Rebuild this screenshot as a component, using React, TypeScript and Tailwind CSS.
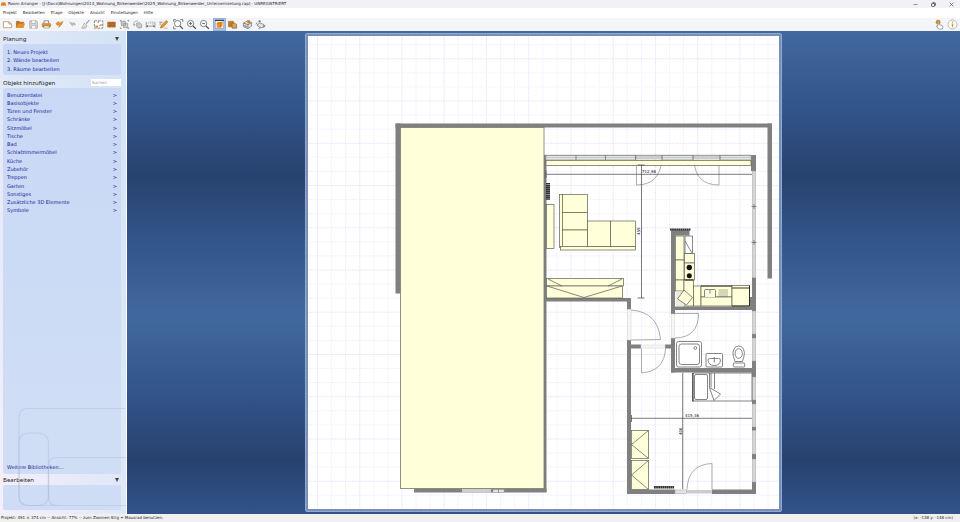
// src/App.tsx
import { useState, type ReactNode } from "react";

const TITLE =
  "Room Arranger - [J:\\Docs\\Wohnungen\\2014_Wohnung_Birkenwerder\\2025_Wohnung_Birkenwerder_Untervermietung.rap] - UNREGISTRIERT";

const MENU = ["Projekt", "Bearbeiten", "Etage", "Objekte", "Ansicht", "Einstellungen", "Hilfe"];

const STEPS = ["1. Neues Projekt", "2. Wände bearbeiten", "3. Räume bearbeiten"];

const CATEGORIES = [
  "Benutzerdatei",
  "Basisobjekte",
  "Türen und Fenster",
  "Schränke",
  "Sitzmöbel",
  "Tische",
  "Bad",
  "Schlafzimmermöbel",
  "Küche",
  "Zubehör",
  "Treppen",
  "Garten",
  "Sonstiges",
  "Zusätzliche 3D Elemente",
  "Symbole",
];

const ORANGE = "#e8912a";
const DARK = "#555555";
const GREY = "#a5a5a5";

// ====== TOOLBAR ICONS (12x12 grid) ======
type Tool = { label: string; icon: ReactNode; active?: boolean };

const lens = (
  <>
    <circle cx="5" cy="5" r="3.4" fill="#fff" stroke={DARK} strokeWidth="0.8" />
    <path d="M7.6 7.6 10.8 10.8" stroke={DARK} strokeWidth="1.4" />
  </>
);

const TOOL_GROUPS: Tool[][] = [
  [
    { label: "Neu", icon: <path d="M1.5 9.5V3h6l3 2.5v4z M7.5 3v2.5h3" fill="#fff" stroke="#b08a5c" strokeWidth="0.8" /> },
    {
      label: "Öffnen",
      icon: (
        <>
          <path d="M1.5 9.5V2.5h3l1 1h4V5" fill="#b9701c" stroke="#9a5f1c" strokeWidth="0.6" />
          <path d="M1.5 9.8 3.5 5h7.5L9.2 9.8z" fill={ORANGE} />
        </>
      ),
    },
    {
      label: "Speichern",
      icon: (
        <>
          <path d="M2 2h7l1.2 1.2V10H2z" fill="#dcdcdc" stroke={GREY} strokeWidth="0.9" />
          <path d="M4 2v3h4V2M3.8 10V7h4.6v3" fill="#f8f8f8" stroke={GREY} strokeWidth="0.7" />
        </>
      ),
    },
    {
      label: "Drucken",
      icon: (
        <>
          <path d="M3.3 5V2h5v3" fill="#fff" stroke={DARK} strokeWidth="0.7" />
          <rect x="1.2" y="4.8" width="9.4" height="3.8" rx="0.8" fill={ORANGE} stroke="#a8681f" strokeWidth="0.5" />
          <path d="M3 7.6h6v2.2H3z" fill="#fff" stroke={DARK} strokeWidth="0.5" />
        </>
      ),
    },
    {
      label: "Rückgängig",
      icon: <path d="M2 4.8 5 2.8l.5 1.2C7.5 3.6 8.6 3 9.8 2.6 9.2 5.2 7.6 7 5 9.3c.7-1.3.8-2.2.6-3l-2 .7z" fill={ORANGE} stroke="#a8681f" strokeWidth="0.4" />,
    },
    {
      label: "Wiederholen",
      icon: <path d="M9.8 5.5 6.8 3.2 6.3 4.3C4.5 3.8 3.5 3.3 2.2 3c1.2 2.3 2.3 3.7 4.8 6-.7-1.3-.8-2-.6-2.7l2.2.7z" fill="#b8b8b8" />,
    },
    {
      label: "Format übertragen",
      icon: (
        <>
          <path d="M10.3 1.2 6.6 5.2" stroke={GREY} strokeWidth="1.3" />
          <path d="M4.5 4.6 7.6 7.2 6 10H1.8c1.5-1.5 1.8-3 2.7-5.4z" fill="#ececec" stroke="#8f8f8f" strokeWidth="0.7" />
          <path d="M4 10l1.3-2.5" stroke="#8f8f8f" strokeWidth="0.5" />
        </>
      ),
    },
    {
      label: "Grundriss",
      icon: (
        <>
          <rect x="1.5" y="2" width="9.2" height="8" fill="#fff" stroke={DARK} strokeWidth="0.7" strokeDasharray="3 1" />
          <path d="M2.5 7h3v2.5h-3z" fill={ORANGE} />
          <path d="M5.8 2v2.5M7.5 6.5h3M7.5 6.5v1.5" stroke={DARK} strokeWidth="0.7" />
        </>
      ),
    },
    {
      label: "Wände",
      icon: (
        <>
          <rect x="1.5" y="3" width="9" height="6.2" fill="#b87427" />
          <path d="M1.5 5h9M1.5 7.1h9M4 3v2M7.5 3v2M5.8 5v2.1M9 5v2.1M4 7.1v2.1M7.5 7.1v2.1" stroke="#8a5a25" strokeWidth="0.4" />
        </>
      ),
    },
    {
      label: "Gruppieren",
      icon: (
        <>
          <path d="M2.5 2.5h4.5v4.5H2.5zM5 5h4.5v4.5H5z" fill="#cccccc" stroke="#8c8c8c" strokeWidth="0.7" />
          <path d="M1 1.2h1.6v1.6H1zM9.4 1.2H11v1.6H9.4zM1 9.3h1.6v1.6H1zM9.4 9.3H11v1.6H9.4z" fill="#999999" />
        </>
      ),
    },
    {
      label: "Drehen",
      icon: (
        <>
          <path d="M6.5 2.5C3 1.5 1 4 2.2 7" fill="none" stroke={GREY} strokeWidth="1" />
          <path d="M1 5.5 2.3 8l1.8-2z" fill={GREY} />
          <path d="M5 4.5 8.5 4l2 2v3.5L7 10 5 8z" fill="#c9c9c9" stroke="#909090" strokeWidth="0.7" />
        </>
      ),
    },
    {
      label: "Bemaßung",
      icon: (
        <>
          <path d="M1.3 3v6.5M10.8 3v6.5M1.3 7.8h9.5" stroke={DARK} strokeWidth="0.6" />
          <path d="M1.5 7.8 3.3 6.8v2zM10.6 7.8 8.8 6.8v2z" fill={DARK} />
          <path d="M3.5 3.2v2.5M5 3.2h1.2v2.5M7.5 3.2h1.2v2.5H7.5" fill="none" stroke={GREY} strokeWidth="0.7" />
        </>
      ),
    },
    {
      label: "Zeichnen",
      icon: (
        <>
          <path d="M1.5 3.5h3.5M1.5 5.5h2" stroke={DARK} strokeWidth="0.7" />
          <path d="M2.5 10 3.5 7 9 1.5l1.8 1.7L5.5 9z" fill={ORANGE} stroke="#946025" strokeWidth="0.5" />
          <path d="M6 10h4.5" stroke={ORANGE} strokeWidth="0.8" />
        </>
      ),
    },
  ],
  [
    {
      label: "Alles zeigen",
      icon: (
        <>
          {lens}
          <path d="M.7 3V.7H3M8 .7h2.7V3M.7 8v2.7H3" fill="none" stroke={DARK} strokeWidth="0.8" />
        </>
      ),
    },
    { label: "Vergrößern", icon: <>{lens}<path d="M3.2 5h3.6M5 3.2v3.6" stroke={DARK} strokeWidth="0.9" /></> },
    { label: "Verkleinern", icon: <>{lens}<path d="M3.2 5h3.6" stroke={DARK} strokeWidth="0.9" /></> },
  ],
  [
    {
      label: "3D Ansicht",
      active: true,
      icon: (
        <>
          <path d="M1.3 1.5h9.4v9H1.3z" fill="#f4efe6" stroke="#777" strokeWidth="0.6" />
          <path d="M1 1.5h10" stroke="#333" strokeWidth="1.2" />
          <path d="M3 4.5 5 3.2h4.5L9 8 7 9.5H3z" fill={ORANGE} />
          <path d="M3 4.5h4L9.5 3.2M7 4.5v5" fill="none" stroke="#a8681f" strokeWidth="0.5" />
        </>
      ),
    },
    {
      label: "Objektliste",
      icon: (
        <>
          <path d="M1.5 2.5h5.5v6h-5.5z" fill="#c9781f" stroke="#8f5a1c" strokeWidth="0.5" />
          <path d="M5.5 4.5h3L10.5 6v4h-5z" fill="#d9a25e" stroke="#7d5a30" strokeWidth="0.7" />
        </>
      ),
    },
  ],
  [
    {
      label: "3D Objekt",
      icon: (
        <>
          <path d="M1.5 4.5 6 2l4.5 2v3.8L6.5 10.5l-5-2z" fill="#e2e2e2" stroke="#777" strokeWidth="0.8" />
          <path d="M1.5 4.5 6.5 6.2l4-2.2M6.5 6.2v4.3" fill="none" stroke={DARK} strokeWidth="0.7" />
          <path d="M5.8 1.5h3v3.2h-3z" fill="#d37a1c" />
          <path d="M2.5 6.5 5 7.5v1.5L2.5 8z" fill="#777" />
        </>
      ),
    },
    {
      label: "3D Rundgang",
      icon: (
        <>
          <path d="M2 6.5 5.5 4.3 9.5 6 9 8.8 6 9.8z" fill="#e4e4e4" stroke="#666" strokeWidth="0.7" />
          <circle cx="5" cy="2.6" r="1.2" fill="#777" />
          <path d="M.8 5.5 2.5 4M11 6.5 9.5 9.5M4 10.5l2-1.5" stroke="#666" strokeWidth="1" />
        </>
      ),
    },
  ],
];

function ToolButton({ tool }: { tool: Tool }) {
  return (
    <button
      type="button"
      aria-label={tool.label}
      className={
        tool.active
          ? "grid h-[13px] w-[13px] place-items-center bg-[#b5cbee] outline outline-[#92b0dd] -outline-offset-1"
          : "grid h-[13px] w-[13px] place-items-center"
      }
    >
      <svg viewBox="0 0 12 12" className="h-[11px] w-[11px]" fill="none">
        {tool.icon}
      </svg>
    </button>
  );
}

function TitleBar() {
  return (
    <header className="flex h-2 shrink-0 items-center gap-[2px] bg-[#f1f1f8] pl-[1px] text-[4px] leading-none">
      <svg viewBox="0 0 10 7" className="h-[4px] w-[5px]">
        <path d="M0 2.5 2 0h6l2 2.5V7H0z" fill="#e8912a" />
        <path d="M1.5 3.5h7" stroke="#b96a17" />
      </svg>
      <h1 className="flex-1 truncate leading-[8px] text-[#222]">{TITLE}</h1>
      <div className="flex">
        <button type="button" aria-label="Minimieren" className="grid h-2 w-[18px] place-items-center">
          <svg viewBox="0 0 5 5" className="size-[5px]"><path d="M.5 2.5h4" stroke="#666" strokeWidth="0.7" /></svg>
        </button>
        <button type="button" aria-label="Wiederherstellen" className="grid h-2 w-[18px] place-items-center">
          <svg viewBox="0 0 5 5" className="size-[5px]" fill="none" stroke="#444" strokeWidth="0.8">
            <rect x="0.6" y="1.5" width="2.9" height="2.9" rx="0.5" />
            <path d="M1.5.7h2.2q.7 0 .7.7v2.2" />
          </svg>
        </button>
        <button type="button" aria-label="Schließen" className="grid h-2 w-[18px] place-items-center">
          <svg viewBox="0 0 5 5" className="size-[5px]"><path d="M.6.6 4.4 4.4M4.4.6.6 4.4" stroke="#555" strokeWidth="0.7" /></svg>
        </button>
      </div>
    </header>
  );
}

function Toolbar() {
  return (
    <div className="flex h-[13px] shrink-0 items-center justify-between bg-[#f3f5f8] px-[1px]">
      <div className="flex gap-[2px]">
        {TOOL_GROUPS.map((group, i) => (
          <div key={i} className="flex">
            {group.map((t) => (
              <ToolButton key={t.label} tool={t} />
            ))}
          </div>
        ))}
      </div>
      <div className="flex">
        <ToolButton
          tool={{
            label: "Registrieren",
            icon: (
              <>
                <circle cx="4.5" cy="3.5" r="2.6" fill="#d98a2b" />
                <path d="M4 3.2q.8-.8 1.3 0v3l3.5.8q1 .4.8 1.6L9 11H5L2.5 7.8q.4-.9 1.5 0z" fill="#fff" stroke="#777" strokeWidth="0.7" />
              </>
            ),
          }}
        />
        <ToolButton
          tool={{
            label: "Info",
            icon: (
              <>
                <circle cx="6" cy="6" r="4.9" fill="#fff" stroke="#a9a9a9" strokeWidth="0.9" />
                <path d="M6 5v4M6 2.7v1.4" stroke={ORANGE} strokeWidth="1.5" />
              </>
            ),
          }}
        />
      </div>
    </div>
  );
}

function SectionHeader({ children, collapsible }: { children: string; collapsible?: boolean }) {
  return (
    <div className="flex h-[11px] items-center justify-between font-['Noto_Sans',sans-serif] text-[6px] leading-none text-[#222]">
      <h2>{children}</h2>
      {collapsible && (
        <button type="button" aria-label={`${children} einklappen`} className="px-1">
          <svg viewBox="0 0 4 4" className="size-1"><path d="M0 0h4L2 4z" fill="#444" /></svg>
        </button>
      )}
    </div>
  );
}

function Sidebar() {
  const [query, setQuery] = useState("");

  return (
    <aside className="relative flex w-[127px] shrink-0 flex-col border-r border-white bg-linear-to-tr from-[#f6effb] via-[#e0e8f7] to-[#d3e3f5] px-[3px] pt-[2px] pb-1 text-[#1c1c9c]">
      <SectionHeader collapsible>Planung</SectionHeader>
      <ol className="mr-[2px] grid h-[31px] rounded-[2px] bg-[#c9d8f5] px-1 pt-1 pb-[1px] text-[5px]">
        {STEPS.map((s) => (
          <li key={s} className="flex items-center">
            <a href="#" className="leading-none">{s}</a>
          </li>
        ))}
      </ol>

      <div className="mt-[2px] mr-[2px] flex items-center justify-between">
        <SectionHeader>Objekt hinzufügen</SectionHeader>
        <input
          aria-label="Suchen"
          value={query}
          onChange={(e) => setQuery(e.target.value)}
          placeholder="Suchen"
          className="h-[7px] w-[30px] bg-white px-[1px] text-[4px] leading-none outline-none placeholder:text-[#999]"
        />
      </div>

      <div className="mr-[2px] flex flex-1 flex-col justify-between rounded-[2px] bg-linear-to-b from-[#c9d8f5] to-[#d0def5] px-1 pt-[3px] pb-[3px] text-[5px]">
        <ul className="grid h-[124px]">
          {CATEGORIES.map((c) => (
            <li key={c} className="flex">
              <a href="#" className="flex flex-1 items-center justify-between leading-none">
                <span>{c}</span>
                <span>&gt;</span>
              </a>
            </li>
          ))}
        </ul>
        <a href="#" className="self-start leading-[7px]">Weitere Bibliotheken...</a>
      </div>

      <SectionHeader collapsible>Bearbeiten</SectionHeader>
      <div className="mr-[2px] h-[25px] rounded-[2px] bg-[#cedcf5]" />

      {/* Decorative outline in the lower corner */}
      <svg
        viewBox="0 0 126 119"
        className="pointer-events-none absolute bottom-0 left-0 h-[119px] w-[126px]"
        fill="none"
        stroke="#a4b4d4"
        strokeOpacity="0.35"
        strokeWidth="1.2"
      >
        <path d="M126 13.5H28q-9 0-9 9v79q0 9 9 9h98" />
        <rect x="19" y="38" width="29.5" height="72.5" rx="9" />
        <path d="M126 62.5H57q-8.5 0-8.5 8v32q0 8 8.5 8" />
      </svg>
    </aside>
  );
}

// ====== FLOOR PLAN ======
type Rect = [number, number, number, number]; // x1, y1, x2, y2

const WALLS: Rect[] = [
  [395.5, 123.5, 772, 127.5],
  [395.5, 123.5, 400.5, 293.5],
  [767.5, 123.5, 772, 278.5],
  [544, 155, 546.5, 492],
  [414, 488.5, 546.5, 492.5],
  [751, 155, 756, 171],
  [752, 277.5, 756, 311],
  [671, 306.5, 756, 310],
  [671, 230, 675, 314],
  [671, 230, 689.5, 235.5],
  [546, 298, 631, 301.5],
  [627, 298, 631, 309.5],
  [627, 340, 631, 494],
  [631, 344.5, 641, 348.5],
  [665, 344.5, 672, 348.5],
  [671, 338, 675, 372.5],
  [671, 368, 756, 372.5],
  [752, 334, 756, 338],
  [752, 361, 756, 377],
  [752, 400, 756, 404],
  [752, 427, 756, 430.5],
  [752, 454, 756, 459],
  [752, 482, 756, 494],
  [627, 489.5, 675, 494],
  [712, 489.5, 756, 494],
];

const OPENINGS: Rect[] = [
  [546, 155.5, 636, 159.5],
  [662, 155.5, 693, 159.5],
  [720, 155.5, 751, 159.5],
  [752.5, 171, 755.5, 277.5],
  [752.5, 311, 755.5, 334],
  [752.5, 338, 755.5, 361],
  [752.5, 377, 755.5, 400],
  [752.5, 404, 755.5, 427],
  [752.5, 430.5, 755.5, 454],
  [752.5, 459, 755.5, 482],
  [675, 490, 686.5, 493.5],
  [493, 489.5, 504, 492.5],
];

const FURNITURE: Rect[] = [
  // strip below the windows
  [546, 160.5, 751, 165.5],
  // sideboard and sofa
  [546.5, 204.5, 554, 248.5],
  [559.5, 194.5, 563, 247.5],
  [562.5, 194.5, 587.5, 212.5],
  [562.5, 212.5, 587.5, 230],
  [562.5, 230, 587.5, 247],
  [587.5, 221, 610.5, 246.5],
  [610.5, 221, 635.5, 246.5],
  [560.5, 246.5, 635.5, 250],
  [546.5, 278.5, 623.5, 286],
  [546.5, 286, 622.5, 298],
  // kitchen
  [675.5, 236, 684, 260],
  [675.5, 260, 684, 280],
  [675.5, 280, 684, 291],
  [684.5, 253.5, 694.5, 263],
  [684.5, 263, 694.5, 280],
  [684, 280, 693.5, 306],
  [693.5, 286, 701, 306],
  [701, 286, 732, 297],
  [701, 297, 732, 306],
  [732, 285.5, 749.5, 306],
  // wardrobes
  [631.5, 430.5, 648.5, 458.5],
  [631.5, 460.5, 648.5, 489.5],
];

const GRID_X = Array.from({ length: 33 }, (_, i) => 317.5 + i * 14.08);
const GRID_Y = Array.from({ length: 34 }, (_, i) => 44.7 + i * 14.08);

function Boxes({ items }: { items: Rect[] }) {
  return (
    <>
      {items.map(([x1, y1, x2, y2], i) => (
        <rect key={i} x={x1} y={y1} width={x2 - x1} height={y2 - y1} />
      ))}
    </>
  );
}

function FloorPlan() {
  return (
    <svg viewBox="308 36 471 473" className="h-full w-auto bg-white" role="img" aria-label="Grundriss" fill="none">
      {/* Grid */}
      <g strokeWidth="0.8" strokeDasharray="2 0.6">
        {GRID_X.map((x, i) => (
          <path key={x} d={`M${x} 36V509`} stroke={i % 3 === 0 ? "#e2e2fb" : "#efeffc"} />
        ))}
        {GRID_Y.map((y, i) => (
          <path key={y} d={`M308 ${y}H779`} stroke={i % 3 === 1 ? "#e2e2fb" : "#efeffc"} />
        ))}
      </g>

      <g fill="#808080"><Boxes items={WALLS} /></g>

      {/* Terrace */}
      <rect x="400.5" y="127.5" width="143.5" height="361" fill="#ffffd9" stroke="#77776a" strokeWidth="0.8" />
      <path d="M462 489h29v3.5h-29z" fill="#cfcfcf" />
      <path d="M636 155.5h26v4h-26zM693 155.5h27v4h-27zM686.5 490H712v3.5h-25.5z" fill="#cccccc" />

      {/* Windows */}
      <g fill="#e3e6e6" stroke="#9a9a9a" strokeWidth="0.5"><Boxes items={OPENINGS} /></g>
      <path
        d="M546 157.5h90M662 157.5h31M720 157.5h31M754 171v106M754 311v23M754 338v23M754 377v23M754 404v23M754 431v23M754 459v23"
        stroke="#a8a8a8"
        strokeWidth="0.5"
      />
      <path d="M576 155v5M605.5 155v5M635.5 155v5M662 155v5M693 155v5M720 155v5M751.5 206.5h5M751.5 242.5h5M754 204v5M754 240v5M498.5 489.5v3" stroke="#666" strokeWidth="0.7" />
      <path d="M544 155.3h207" stroke="#777" strokeWidth="0.7" />

      {/* Door frames and swings */}
      <path d="M627.5 309.5h3.5V340h-3.5zM671.5 314h3v24h-3zM641 345h24v3h-24z" fill="#f6f6f6" stroke="#d2d2d2" strokeWidth="0.5" />
      <g stroke="#8a8a8a" strokeWidth="0.7">
        <path d="M636.5 160v25M636.5 185q23 0 25.5-25" />
        <path d="M719 160v25M719 185q-24 0-25-25" />
        <path d="M631 310q27 2 29.5 29.5L631 340" />
        <path d="M675 313.5h23.5q0 24-23.5 24.5" />
        <path d="M641.5 348.5V373q23-2 24-24.5" />
        <path d="M712 489.5v-26q-24 1-25 26" />
      </g>

      <g fill="#ffffd9" stroke="#5f5f52" strokeWidth="0.7"><Boxes items={FURNITURE} /></g>

      {/* Cabinet fronts */}
      <path
        d="M548 279l14 7M622 279l-14 7M547 286l37 11.5L622 286M648.5 430.5 631.5 444.5l17 14M648.5 460.5 631.5 475l17 14.5"
        stroke="#555"
        strokeWidth="0.7"
      />

      {/* Kitchen details */}
      <g stroke="#555" strokeWidth="0.7">
        <path d="M685 236h7.5v17.5H685z" fill="#fff" />
        <path d="M685 241l7 12" />
        <path d="M676 291.5h8v14.5h-8z" fill="#ececdc" stroke="none" />
        <path d="M684 290 692.5 297.5 686.5 305 677.5 299z" fill="#ffffd9" />
        <path d="M684.5 280h9" strokeWidth="1" stroke="#222" />
        <path d="M704.5 297v-6.5q0-1 1-1h9q1 0 1 1v6.5M710 290v3.5" fill="#fbfbe0" />
        <path d="M718.5 290h9.5M718.5 292h9.5M718.5 294h9.5M718.5 296h9.5" strokeWidth="0.5" />
        <path d="M732 288h17.5M732 306h17.5V285.5M701 286h31" stroke="#222" strokeWidth="0.9" />
      </g>
      <circle cx="689.3" cy="267.5" r="2.7" fill="#111" />
      <circle cx="689.3" cy="275.7" r="2.5" fill="#111" />
      <path d="M750 297h2v10h-2z" fill="#808080" />

      {/* Radiators */}
      <g stroke="#333">
        <path d="M548 183v17" strokeWidth="4" strokeDasharray="1.6 0.3" />
        <path d="M670 229.5h20.5" strokeWidth="2" strokeDasharray="1.8 0.3" />
        <path d="M654 487.2h20" strokeWidth="2.5" strokeDasharray="1.8 0.3" />
      </g>

      {/* Bathroom */}
      <g stroke="#777" strokeWidth="0.9" fill="#fff">
        <rect x="676.5" y="341.5" width="25" height="25.5" rx="2" />
        <rect x="679" y="344" width="20.5" height="20.5" rx="2.5" />
        <circle cx="695.3" cy="348" r="1.4" />
        <rect x="706" y="353.5" width="16.5" height="13.5" rx="1" />
        <path d="M708 360q0-1.5 2-1.5h8.5q2 0 2 1.5-.5 5.500-6.300 5.500T708 360zM714.300 357v5.500" />
        <path d="M735 361.5q-2-5-2-9 1-6.5 5.7-6.5t5.7 6.5q0 4-2 9z" />
        <ellipse cx="738.7" cy="353.5" rx="3.6" ry="4.8" />
        <rect x="733.3" y="363" width="11.4" height="4" rx="0.8" />
      </g>

      {/* Desk and chair */}
      <g stroke="#666" strokeWidth="0.8">
        <path d="M692.5 373h59.5v28h-59.5z" />
        <path d="M693 373v28.5" stroke="#44443a" strokeWidth="1.2" />
        <rect x="694.5" y="374.5" width="13" height="25" rx="1.5" fill="#fff" />
        <path d="M709.5 373v14M711 373v14.5M714.5 373v16" />
        <path d="M709.5 387.5l11 6.5-6.5 6.5z" fill="#fff" />
      </g>

      {/* Dimensions */}
      <g stroke="#444" strokeWidth="0.7">
        <path d="M546 174.3h206M546 170.5v7.5" />
        <path d="M641.5 165v133M637.5 165h7M637.5 298h7" />
        <path d="M631 418.3h121M631.5 415v7" />
        <path d="M682.7 373v116" />
      </g>
      <g fill="#111" className="font-['DejaVu_Sans',sans-serif] text-[4px]">
        <text x="642" y="173">712,98</text>
        <text x="685" y="417">415,36</text>
        <text transform="translate(640 235) rotate(-90)">459</text>
        <text transform="translate(682 435) rotate(-90)">406</text>
      </g>
    </svg>
  );
}

export default function App() {
  return (
    <div className="flex h-screen flex-col overflow-hidden bg-white font-['DejaVu_Sans',sans-serif] text-[#222]">
      <TitleBar />
      <nav className="flex h-[10px] shrink-0 items-center gap-[6px] px-[3px] text-[4px] leading-none">
        {MENU.map((m) => (
          <button key={m} type="button">{m}</button>
        ))}
      </nav>
      <Toolbar />

      <div className="flex min-h-0 flex-1">
        <Sidebar />
        <main className="flex min-w-0 flex-1 justify-center bg-[linear-gradient(to_bottom,#42699f_0%,#33568c_15%,#27426f_30%,#33568c_44%,#42699f_59%,#33568c_74%,#27426f_89%,#30548a_100%)] py-[2px]">
          <div className="h-full rounded-[2px] border border-[#94a9cd] bg-[#7690bb] p-[2px]">
            <FloorPlan />
          </div>
        </main>
      </div>

      <footer className="h-2 shrink-0 bg-[#f0f0f0] px-[1px] text-[4px] leading-[8px]">
        <div className="flex justify-between pr-[6px]">
          <span>Projekt: 491 × 374 cm -- Ansicht: 77% -- zum Zoomen Strg + Mausrad benutzen.</span>
          <span>(x: -138 y: -148 cm)</span>
        </div>
      </footer>
    </div>
  );
}
